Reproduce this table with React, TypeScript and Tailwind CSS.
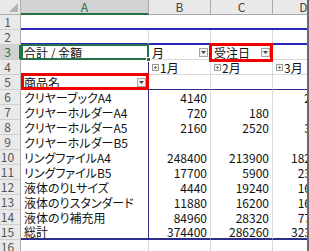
import React from "react";

type Cell = {
  text?: React.ReactNode;
  align?: "left" | "right";
  extra?: string;
  overlay?: React.ReactNode;
};

const widths = ["w-[21px]", "w-[128px]", "w-[62px]", "w-[62px]", "w-[62px]"];

const Dropdown = () => (
  <span className="absolute right-[2px] top-[3px] w-[9px] h-[9px] box-border border border-[#a6a6a6] bg-[#f2f2f2] flex items-center justify-center">
    <svg width="5" height="3" viewBox="0 0 5 3">
      <path d="M0 0h5L2.5 3z" fill="#444" />
    </svg>
  </span>
);

const Expand = () => (
  <svg width="7" height="7" viewBox="0 0 7 7" className="mr-[1px] shrink-0">
    <rect x="0.5" y="0.5" width="6" height="6" fill="#f4f4f4" stroke="#9a9a9a" />
    <path d="M2 3.5h3M3.5 2v3" stroke="#7a7a7a" />
  </svg>
);

const RedBox = ({ cls }: { cls: string }) => (
  <div className={`absolute border-[3px] border-[#f00000] pointer-events-none z-20 ${cls}`} />
);

function RowHead({ n, active }: { n: number; active?: boolean }) {
  return (
    <div
      className={`${widths[0]} shrink-0 h-full box-border border-b border-[#cfcfcf] flex items-center ${
        active
          ? "bg-[#d2d2d2] text-[#217346] border-r-2 border-r-[#217346]"
          : "bg-[#e9e9e9] text-[#555] border-r border-r-[#ababab]"
      }`}
    >
      <span className="w-[15px] text-center text-[12px] leading-[12px]">{n}</span>
    </div>
  );
}

function Row({ n, cells, active }: { n: number; cells: Cell[]; active?: boolean }) {
  return (
    <div className="flex h-[15px]">
      <RowHead n={n} active={active} />
      {cells.map((c, i) => (
        <div
          key={i}
          className={`${widths[i + 1]} shrink-0 h-full box-border relative flex items-center whitespace-nowrap ${
            c.align === "right" ? "justify-end pr-[3px]" : "pl-[3px]"
          } ${c.extra ?? "border-r border-b border-[#d9d9d9]"}`}
        >
          {c.text}
          {c.overlay}
        </div>
      ))}
    </div>
  );
}

const body: [string, string, string, string][] = [
  ["クリヤーブックA4", "4140", "", "2760"],
  ["クリヤーホルダーA4", "720", "180", ""],
  ["クリヤーホルダーA5", "2160", "2520", "3240"],
  ["クリヤーホルダーB5", "", "", ""],
  ["リングファイルA4", "248400", "213900", "182850"],
  ["リングファイルB5", "17700", "5900", "23600"],
  ["液体のりLサイズ", "4440", "19240", "16280"],
  ["液体のりスタンダード", "11880", "16200", "16740"],
  ["液体のり補充用", "84960", "28320", "77880"],
];

const grid = "border-r border-b border-[#d9d9d9]";
const topLine = "border-r border-r-[#d9d9d9] border-b-2 border-b-[#2828b8]";
const colAEdge = "border-r border-r-[#2d2d8c]";
const navyUnder = "border-r border-r-[#d9d9d9] border-b border-b-[#2d2d8c]";
const totalUnder = "border-r border-r-[#d9d9d9] border-b-2 border-b-[#2d2d8c]";

export default function App() {
  return (
    <div className="w-[309px] h-[251px] overflow-hidden bg-white relative font-['Noto_Sans_CJK_JP','Noto_Sans',sans-serif] text-[12px] leading-[13px] text-[#111] [font-feature-settings:'palt']">
      <div className="w-[335px]">
        {/* column headers */}
        <div className="flex h-[15px] bg-[#e9e9e9] text-[#444] leading-[12px]">
          <div className="w-[21px] h-full box-border border-r border-b border-[#ababab] relative">
            <svg width="9" height="9" viewBox="0 0 9 9" className="absolute left-[9px] top-[3px]">
              <path d="M9 0V9H0z" fill="#b4b4b4" />
            </svg>
          </div>
          <div className="w-[128px] h-full box-border border-r border-[#ababab] border-b-2 border-b-[#217346] bg-[#d2d2d2] text-[#217346] flex items-center justify-center">
            A
          </div>
          {["B", "C", "D"].map((l) => (
            <div
              key={l}
              className="w-[62px] h-full box-border border-r border-b border-[#ababab] flex items-center justify-center"
            >
              {l}
            </div>
          ))}
        </div>

        <Row n={1} cells={[0, 1, 2, 3].map(() => ({ extra: "border-b-2 border-b-[#2828b8]" }))} />
        <Row n={2} cells={[0, 1, 2, 3].map(() => ({ extra: topLine }))} />
        <Row
          n={3}
          active
          cells={[
            {
              text: "合計 / 金額",
              extra: grid,
              overlay: (
                <>
                  <div className="absolute left-0 -right-[1px] -top-[1px] bottom-[-1px] border-2 border-[#217346] z-10" />
                  <div className="absolute -right-[3px] -bottom-[3px] w-[5px] h-[5px] bg-[#217346] border border-white z-10" />
                </>
              ),
            },
            { text: "月", extra: grid, overlay: <Dropdown /> },
            {
              text: "受注日",
              extra: grid,
              overlay: (
                <>
                  <Dropdown />
                  <RedBox cls="-left-[2px] -right-[1px] -top-[2px] -bottom-[3px]" />
                </>
              ),
            },
            { extra: grid },
          ]}
        />
        <Row
          n={4}
          cells={[
            { extra: "border-r border-r-[#2d2d8c] border-b border-b-[#d9d9d9]" },
            { text: <><Expand />1月</>, extra: grid },
            { text: <><Expand />2月</>, extra: grid },
            { text: <><Expand />3月</>, extra: grid },
          ]}
        />
        <Row
          n={5}
          cells={[
            {
              text: "商品名",
              extra: "border-r border-r-[#2d2d8c] border-b border-b-[#2d2d8c]",
              overlay: (
                <>
                  <Dropdown />
                  <RedBox cls="left-0 -right-[1px] -top-[2px] -bottom-[1px]" />
                </>
              ),
            },
            { extra: navyUnder },
            { extra: navyUnder },
            { extra: navyUnder },
          ]}
        />
        {body.map((r, i) => (
          <Row
            key={i}
            n={6 + i}
            cells={[
              { text: r[0], extra: colAEdge },
              { text: r[1], align: "right", extra: "border-r border-r-[#d9d9d9]" },
              { text: r[2], align: "right", extra: "border-r border-r-[#d9d9d9]" },
              { text: r[3], align: "right", extra: "border-r border-r-[#d9d9d9]" },
            ]}
          />
        ))}
        <Row
          n={15}
          cells={[
            { text: "総計", extra: "border-r border-r-[#2d2d8c] border-b-2 border-b-[#2d2d8c]" },
            { text: "374400", align: "right", extra: totalUnder },
            { text: "286260", align: "right", extra: totalUnder },
            { text: "323350", align: "right", extra: totalUnder },
          ]}
        />
        <Row n={16} cells={[{}, {}, {}, {}]} />
      </div>
      <div className="absolute right-0 top-0 bottom-0 w-[2px] bg-[#6b6b6b]" />
    </div>
  );
}
